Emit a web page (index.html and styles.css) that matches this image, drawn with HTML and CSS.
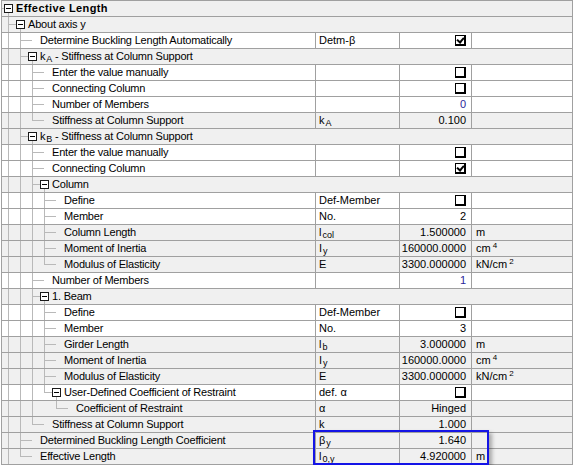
FILE: index.html
```html
<!DOCTYPE html>
<html>
<head>
<meta charset="utf-8">
<link rel="stylesheet" href="styles.css">
</head>
<body>
<div class="grid">
  <div class="row grp g"><span class="x"><b class="box"></b></span><span class="lbl bold">Effective Length</span></div>
  <div class="row grp g"><i class="t"></i><span class="x"><b class="box"></b></span><span class="lbl">About axis y</span></div>
  <div class="row w"><div class="c0"><i class="p"></i><i class="t"></i><i class="s"></i><span class="lbl">Determine Buckling Length Automatically</span></div><div class="c1">Detm-β</div><div class="c2"><span class="cb on"></span></div><div class="c3"></div></div>
  <div class="row grp g"><i class="p"></i><i class="t"></i><span class="x"><b class="box"></b></span><span class="lbl">k<sub>A</sub> - Stiffness at Column Support</span></div>
  <div class="row w"><div class="c0"><i class="p"></i><i class="p"></i><i class="t"></i><i class="s"></i><span class="lbl">Enter the value manually</span></div><div class="c1"></div><div class="c2"><span class="cb"></span></div><div class="c3"></div></div>
  <div class="row w"><div class="c0"><i class="p"></i><i class="p"></i><i class="t"></i><i class="s"></i><span class="lbl">Connecting Column</span></div><div class="c1"></div><div class="c2"><span class="cb"></span></div><div class="c3"></div></div>
  <div class="row w"><div class="c0"><i class="p"></i><i class="p"></i><i class="t"></i><i class="s"></i><span class="lbl">Number of Members</span></div><div class="c1"></div><div class="c2 num blue">0</div><div class="c3"></div></div>
  <div class="row g"><div class="c0"><i class="p"></i><i class="p"></i><i class="e"></i><i class="s"></i><span class="lbl">Stiffness at Column Support</span></div><div class="c1">k<sub>A</sub></div><div class="c2 num">0.100</div><div class="c3"></div></div>
  <div class="row grp g"><i class="p"></i><i class="t"></i><span class="x"><b class="box"></b></span><span class="lbl">k<sub>B</sub> - Stiffness at Column Support</span></div>
  <div class="row w"><div class="c0"><i class="p"></i><i class="p"></i><i class="t"></i><i class="s"></i><span class="lbl">Enter the value manually</span></div><div class="c1"></div><div class="c2"><span class="cb"></span></div><div class="c3"></div></div>
  <div class="row w"><div class="c0"><i class="p"></i><i class="p"></i><i class="t"></i><i class="s"></i><span class="lbl">Connecting Column</span></div><div class="c1"></div><div class="c2"><span class="cb on"></span></div><div class="c3"></div></div>
  <div class="row grp g"><i class="p"></i><i class="p"></i><i class="t"></i><span class="x"><b class="box"></b></span><span class="lbl">Column</span></div>
  <div class="row w"><div class="c0"><i class="p"></i><i class="p"></i><i class="p"></i><i class="t"></i><i class="s"></i><span class="lbl">Define</span></div><div class="c1">Def-Member</div><div class="c2"><span class="cb"></span></div><div class="c3"></div></div>
  <div class="row w"><div class="c0"><i class="p"></i><i class="p"></i><i class="p"></i><i class="t"></i><i class="s"></i><span class="lbl">Member</span></div><div class="c1">No.</div><div class="c2 num">2</div><div class="c3"></div></div>
  <div class="row g"><div class="c0"><i class="p"></i><i class="p"></i><i class="p"></i><i class="t"></i><i class="s"></i><span class="lbl">Column Length</span></div><div class="c1">l<sub>col</sub></div><div class="c2 num">1.500000</div><div class="c3">m</div></div>
  <div class="row g"><div class="c0"><i class="p"></i><i class="p"></i><i class="p"></i><i class="t"></i><i class="s"></i><span class="lbl">Moment of Inertia</span></div><div class="c1">I<sub>y</sub></div><div class="c2 num">160000.0000</div><div class="c3">cm<sup>4</sup></div></div>
  <div class="row g"><div class="c0"><i class="p"></i><i class="p"></i><i class="p"></i><i class="e"></i><i class="s"></i><span class="lbl">Modulus of Elasticity</span></div><div class="c1">E</div><div class="c2 num">3300.000000</div><div class="c3">kN/cm<sup>2</sup></div></div>
  <div class="row w"><div class="c0"><i class="p"></i><i class="p"></i><i class="t"></i><i class="s"></i><span class="lbl">Number of Members</span></div><div class="c1"></div><div class="c2 num blue">1</div><div class="c3"></div></div>
  <div class="row grp g"><i class="p"></i><i class="p"></i><i class="t"></i><span class="x"><b class="box"></b></span><span class="lbl">1. Beam</span></div>
  <div class="row w"><div class="c0"><i class="p"></i><i class="p"></i><i class="p"></i><i class="t"></i><i class="s"></i><span class="lbl">Define</span></div><div class="c1">Def-Member</div><div class="c2"><span class="cb"></span></div><div class="c3"></div></div>
  <div class="row w"><div class="c0"><i class="p"></i><i class="p"></i><i class="p"></i><i class="t"></i><i class="s"></i><span class="lbl">Member</span></div><div class="c1">No.</div><div class="c2 num">3</div><div class="c3"></div></div>
  <div class="row g"><div class="c0"><i class="p"></i><i class="p"></i><i class="p"></i><i class="t"></i><i class="s"></i><span class="lbl">Girder Length</span></div><div class="c1">l<sub>b</sub></div><div class="c2 num">3.000000</div><div class="c3">m</div></div>
  <div class="row g"><div class="c0"><i class="p"></i><i class="p"></i><i class="p"></i><i class="t"></i><i class="s"></i><span class="lbl">Moment of Inertia</span></div><div class="c1">I<sub>y</sub></div><div class="c2 num">160000.0000</div><div class="c3">cm<sup>4</sup></div></div>
  <div class="row g"><div class="c0"><i class="p"></i><i class="p"></i><i class="p"></i><i class="t"></i><i class="s"></i><span class="lbl">Modulus of Elasticity</span></div><div class="c1">E</div><div class="c2 num">3300.000000</div><div class="c3">kN/cm<sup>2</sup></div></div>
  <div class="row w"><div class="c0"><i class="p"></i><i class="p"></i><i class="p"></i><i class="e"></i><span class="x"><b class="box"></b></span><span class="lbl">User-Defined Coefficient of Restraint</span></div><div class="c1">def. α</div><div class="c2"><span class="cb"></span></div><div class="c3"></div></div>
  <div class="row g"><div class="c0"><i class="p"></i><i class="p"></i><i class="p"></i><i class="n"></i><i class="e"></i><i class="s"></i><span class="lbl">Coefficient of Restraint</span></div><div class="c1">α</div><div class="c2 num">Hinged</div><div class="c3"></div></div>
  <div class="row g"><div class="c0"><i class="p"></i><i class="p"></i><i class="e"></i><i class="s"></i><span class="lbl">Stiffness at Column Support</span></div><div class="c1">k</div><div class="c2 num">1.000</div><div class="c3"></div></div>
  <div class="row g"><div class="c0"><i class="p"></i><i class="t"></i><i class="s"></i><span class="lbl">Determined Buckling Length Coefficient</span></div><div class="c1">β<sub>y</sub></div><div class="c2 num">1.640</div><div class="c3"></div></div>
  <div class="row g"><div class="c0"><i class="p"></i><i class="e"></i><i class="s"></i><span class="lbl">Effective Length</span></div><div class="c1">l<sub>0,y</sub></div><div class="c2 num">4.920000</div><div class="c3">m</div></div>
  <div class="hl"></div>
</div>
</body>
</html>
```
FILE: styles.css
```css
:root { --tl: #b9b9b9; --bd: #a0a0a0; }
html, body { margin: 0; padding: 0; background: #ffffff; }
body {
  font-family: "Liberation Sans", Arial, sans-serif;
  font-size: 11px;
  color: #000;
}
.grid {
  position: relative;
  margin-left: 1px;
  width: 570px;
  border-top: 1px solid var(--bd);
  border-left: 1px solid var(--bd);
  border-right: 1px solid var(--bd);
}
.row {
  display: flex;
  height: 15px;
  border-bottom: 1px solid var(--bd);
  line-height: 15px;
  white-space: nowrap;
}
.row.g { background: #f0f0f0; }
.row.w { background: #ffffff; }
.c0 { display: flex; width: 313px; border-right: 1px solid var(--bd); overflow: hidden; }
.c1 { width: 80px; padding-left: 3px; border-right: 1px solid var(--bd); }
.c2 { width: 66px; padding-right: 5px; border-right: 1px solid var(--bd); display: flex; justify-content: flex-end; align-items: flex-start; }
.c3 { width: 96px; padding-left: 4px; }
.num { text-align: right; }
.blue { color: #2a1f9a; }
.lbl { display: block; letter-spacing: -0.2px; }
.lbl.bold { font-weight: bold; letter-spacing: 0.4px; }

i { display: block; flex: none; width: 12px; height: 15px; }
.p { background: linear-gradient(var(--tl), var(--tl)) 6px 0 / 1px 100% no-repeat; }
.t {
  background:
    linear-gradient(var(--tl), var(--tl)) 6px 0 / 1px 100% no-repeat,
    linear-gradient(var(--tl), var(--tl)) 6px 7px / 6px 1px no-repeat;
}
.e {
  background:
    linear-gradient(var(--tl), var(--tl)) 6px 0 / 1px 8px no-repeat,
    linear-gradient(var(--tl), var(--tl)) 6px 7px / 6px 1px no-repeat;
}
.n { background: none; }
.s { width: 14px; background: linear-gradient(var(--tl), var(--tl)) 0 7px / 6px 1px no-repeat; }

.x {
  display: block;
  flex: none;
  width: 14px;
  height: 15px;
  background:
    linear-gradient(var(--tl), var(--tl)) 6px 11px / 1px 4px no-repeat,
    linear-gradient(var(--tl), var(--tl)) 0 7px / 2px 1px no-repeat;
}
.box {
  display: block;
  position: relative;
  box-sizing: border-box;
  width: 9px;
  height: 9px;
  margin: 3px 0 0 2px;
  border: 1px solid #1a1a1a;
  background: #fff;
}
.box::after {
  content: "";
  position: absolute;
  left: 1px;
  top: 3px;
  width: 5px;
  height: 1px;
  background: #000;
}

.cb {
  display: block;
  position: relative;
  box-sizing: border-box;
  width: 11px;
  height: 11px;
  margin-top: 2px;
  border: 1px solid #000;
  border-right-width: 2px;
  border-bottom-width: 2px;
  background: #fff;
}
.cb.on::after {
  content: "";
  position: absolute;
  left: 2px;
  top: 0px;
  width: 3px;
  height: 5px;
  border-right: 2px solid #000;
  border-bottom: 2px solid #000;
  transform: rotate(40deg);
}

sub { font-size: 9px; vertical-align: -2px; line-height: 0; margin-left: 1px; }
sup { font-size: 8px; vertical-align: 4px; line-height: 0; margin-left: 2px; }

.hl {
  position: absolute;
  left: 311px;
  top: 429px;
  width: 172px;
  height: 31px;
  border: 2px solid #1414e6;
  box-shadow: 3px 3px 4px rgba(0, 0, 0, 0.3);
  pointer-events: none;
}
```
